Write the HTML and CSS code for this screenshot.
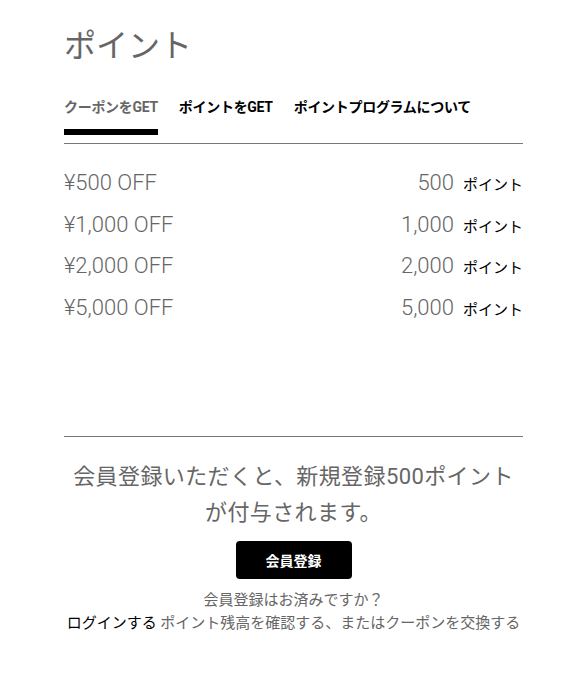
FILE: index.html
```html
<!DOCTYPE html>
<html lang="ja">
<head>
<meta charset="utf-8">
<link rel="stylesheet" href="styles.css">
</head>
<body>
<main class="page">
  <h1 class="title">ポイント</h1>
  <nav class="tabs">
    <a class="tab active">クーポンをGET</a>
    <a class="tab">ポイントをGET</a>
    <a class="tab">ポイントプログラムについて</a>
  </nav>
  <ul class="coupons">
    <li class="row"><span class="off">¥500 OFF</span><span class="cost"><span class="num">500</span><span class="unit">ポイント</span></span></li>
    <li class="row"><span class="off">¥1,000 OFF</span><span class="cost"><span class="num">1,000</span><span class="unit">ポイント</span></span></li>
    <li class="row"><span class="off">¥2,000 OFF</span><span class="cost"><span class="num">2,000</span><span class="unit">ポイント</span></span></li>
    <li class="row"><span class="off">¥5,000 OFF</span><span class="cost"><span class="num">5,000</span><span class="unit">ポイント</span></span></li>
  </ul>
  <section class="signup">
    <p class="lead">会員登録いただくと、新規登録500ポイントが付与されます。</p>
    <button class="btn">会員登録</button>
    <p class="note">会員登録はお済みですか？</p>
    <p class="note"><a class="login">ログインする</a> ポイント残高を確認する、またはクーポンを交換する</p>
  </section>
</main>
</body>
</html>
```
FILE: styles.css
```css
* { box-sizing: border-box; }
body {
  margin: 0;
  background: #fff;
  font-family: Roboto, "Noto Sans CJK JP", sans-serif;
  color: #666;
}
.page {
  width: 459px;
  margin-left: 64px;
  padding-top: 24px;
}
.title {
  margin: 0;
  font-size: 32px;
  font-weight: 400;
  line-height: 44px;
  color: #666;
}
.tabs {
  display: flex;
  gap: 21px;
  margin-top: 30px;
  border-bottom: 1px solid #777;
}
.tab {
  font-size: 14px;
  font-weight: 700;
  letter-spacing: -0.3px;
  color: #000;
  line-height: 18px;
  padding-bottom: 13px;
  border-bottom: 6px solid transparent;
  margin-bottom: 8px;
}
.tab.active {
  color: #666;
  border-bottom-color: #000;
}
.coupons {
  list-style: none;
  margin: 0;
  padding: 24px 0 102px;
  border-bottom: 1px solid #777;
}
.row {
  display: flex;
  justify-content: space-between;
  align-items: baseline;
  height: 41.5px;
  line-height: 30px;
}
.off, .num {
  font-size: 22px;
  font-weight: 300;
  color: #666;
}
.unit {
  font-size: 15px;
  color: #000;
  margin-left: 9px;
}
.signup {
  text-align: center;
  padding-top: 22px;
}
.lead {
  margin: 0 auto;
  max-width: 452px;
  font-size: 22px;
  letter-spacing: 0.4px;
  line-height: 36px;
  color: #666;
}
.btn {
  display: block;
  margin: 10px auto 0;
  width: 116px;
  height: 38px;
  border: none;
  border-radius: 4px;
  background: #000;
  color: #fff;
  font-family: Roboto, "Noto Sans CJK JP", sans-serif;
  font-size: 14px;
  font-weight: 700;
}
.note {
  margin: 0;
  font-size: 15px;
  line-height: 23px;
  color: #666;
}
.btn + .note { margin-top: 10px; }
.login { color: #000; }
```
